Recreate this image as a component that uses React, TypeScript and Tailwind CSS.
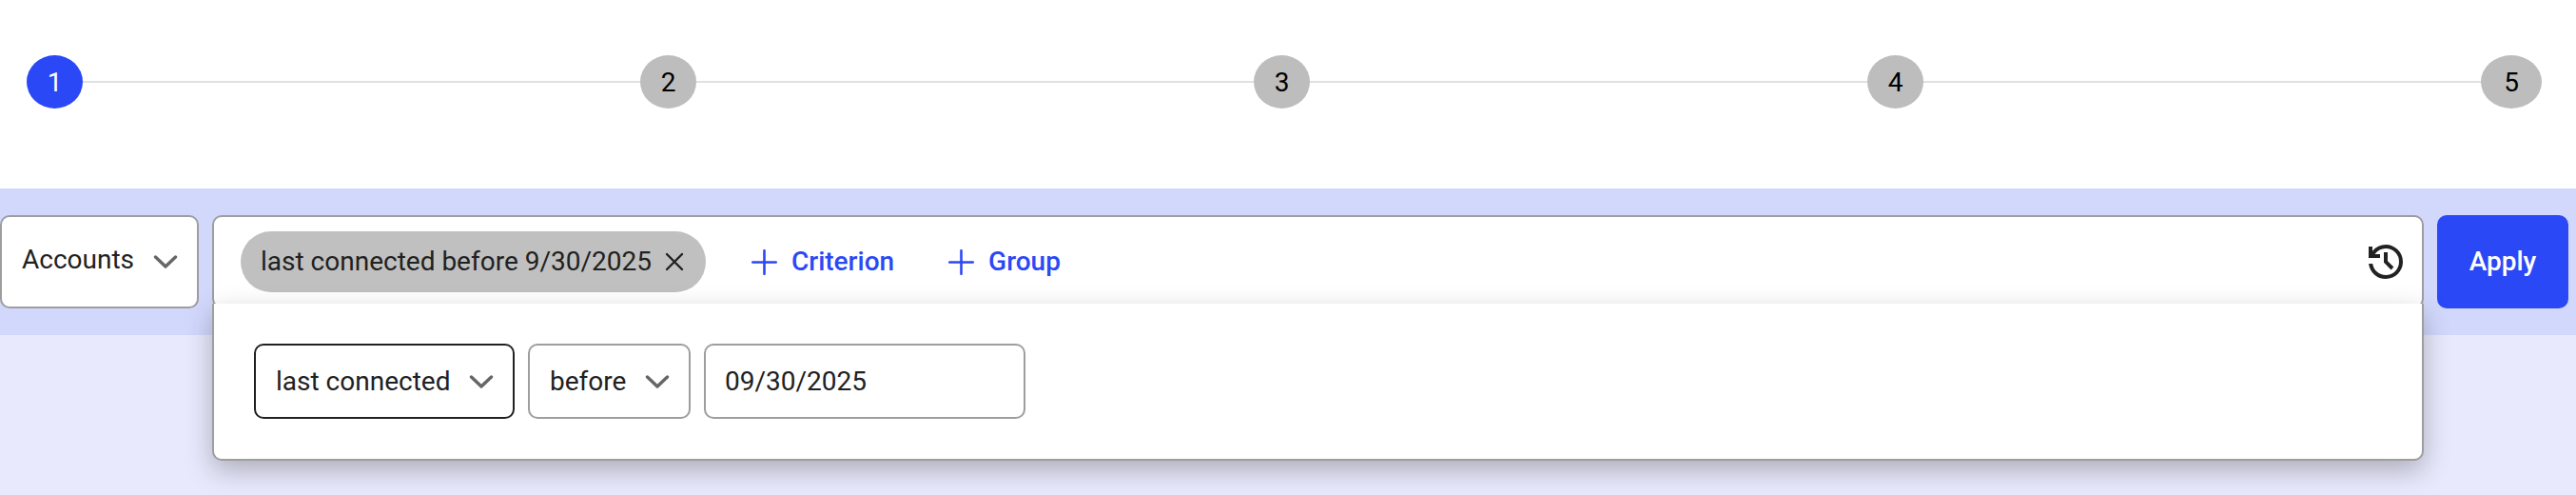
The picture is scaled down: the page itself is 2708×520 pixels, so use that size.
import { useState } from "react";

const steps = [1, 2, 3, 4, 5];

function Stepper() {
  return (
    <ol className="flex items-center bg-white pt-[58px] pr-9 pb-[84px] pl-7">
      {steps.map((step, i) => {
        const last = i === steps.length - 1;
        return (
          <li key={step} className={last ? "flex items-center" : "flex flex-1 items-center"}>
            <button
              type="button"
              aria-current={i === 0 ? "step" : undefined}
              className={`h-14 shrink-0 rounded-[50%] pt-0.5 ${last ? "w-16" : "w-[59px]"} ${
                i === 0 ? "bg-[#2b48f6] text-white" : "bg-[#bdbdbd] text-black"
              }`}
            >
              {step}
            </button>
            {!last && <span className="h-0.5 flex-1 bg-[#e0e0e0]" />}
          </li>
        );
      })}
    </ol>
  );
}

function Select({ label, value, className }: { label: string; value: string; className: string }) {
  return (
    <div className="grid shrink-0 items-center">
      <select
        aria-label={label}
        defaultValue={value}
        className={`col-start-1 row-start-1 appearance-none rounded-[10px] border-2 bg-white pr-[65px] pl-[21px] ${className}`}
      >
        <option>{value}</option>
      </select>
      <svg
        viewBox="0 0 26 14"
        className="pointer-events-none col-start-1 row-start-1 mr-[22px] h-3.5 w-[26px] justify-self-end"
        fill="none"
        stroke="#666"
        strokeWidth="3.4"
        strokeLinecap="round"
        strokeLinejoin="round"
      >
        <path d="M2.5 2 13 12 23.5 2" />
      </svg>
    </div>
  );
}

function AddButton({ children }: { children: string }) {
  return (
    <button type="button" className="flex items-center gap-[15px] font-medium text-[#2b48f6]">
      <svg viewBox="0 0 27 27" className="size-[27px]" stroke="currentColor" strokeWidth="2.6" strokeLinecap="round">
        <path d="M13.5 1.2v24.6M1.2 13.5h24.6" />
      </svg>
      {children}
    </button>
  );
}

export default function App() {
  const [date, setDate] = useState("09/30/2025");
  return (
    <div className="flex min-h-screen flex-col bg-[#e8e9fc] font-[Roboto,sans-serif] text-[28px] leading-8 text-[#212121]">
      <Stepper />
      <div className="flex gap-3.5 bg-[#d2d8fc] py-7 pr-2">
        <Select label="Entity" value="Accounts" className="h-[98px] border-[#9e9e9e] pb-1" />
        <div className="relative min-w-0 flex-1">
          <div className="flex h-[98px] items-center rounded-[10px] border-2 border-[#9e9e9e] bg-white pr-3.5 pl-7">
            <span className="mr-12 flex h-16 items-center gap-[13px] rounded-full bg-[#c0c0c0] pr-[22px] pl-[21px]">
              last connected before 9/30/2025
              <button type="button" aria-label="Remove criterion">
                <svg viewBox="0 0 22 22" className="size-[22px]" stroke="#212121" strokeWidth="2.4" strokeLinecap="round">
                  <path d="M3 3l16 16M19 3L3 19" />
                </svg>
              </button>
            </span>
            <div className="flex flex-1 gap-[57px]">
              <AddButton>Criterion</AddButton>
              <AddButton>Group</AddButton>
            </div>
            <button type="button" aria-label="History">
              <svg viewBox="0 -960 960 960" className="size-12" fill="#222">
                <path d="M480-120q-138 0-240.5-91.5T122-440h82q14 104 92.500 172T480-200q117 0 198.500-81.500T760-480q0-117-81.500-198.500T480-760q-69 0-129 32t-101 88h110v80H120v-240h80v94q51-64 124.500-99T480-840q75 0 140.500 28.500t114 77q48.500 48.500 77 114T840-480q0 75-28.500 140.500t-77 114q-48.500 48.500-114 77T480-120Zm112-192L440-464v-216h80v184l128 128-56 56Z" />
              </svg>
            </button>
          </div>
          <div className="absolute inset-x-0 top-[93px] flex gap-3.5 rounded-b-[10px] border-2 border-t-0 border-[#9e9e9e] bg-white p-[42px] shadow-[0_10px_28px_rgba(0,0,0,0.26)]">
            <Select label="Field" value="last connected" className="h-[79px] border-[#212121]" />
            <Select label="Operator" value="before" className="h-[79px] border-[#9e9e9e]" />
            <input
              type="text"
              aria-label="Date"
              value={date}
              onChange={(e) => setDate(e.target.value)}
              className="h-[79px] w-[338px] rounded-[10px] border-2 border-[#9e9e9e] bg-white px-5"
            />
          </div>
        </div>
        <button type="button" className="h-[98px] w-[138px] rounded-[10px] bg-[#2b48f6] font-medium text-white">
          Apply
        </button>
      </div>
    </div>
  );
}
